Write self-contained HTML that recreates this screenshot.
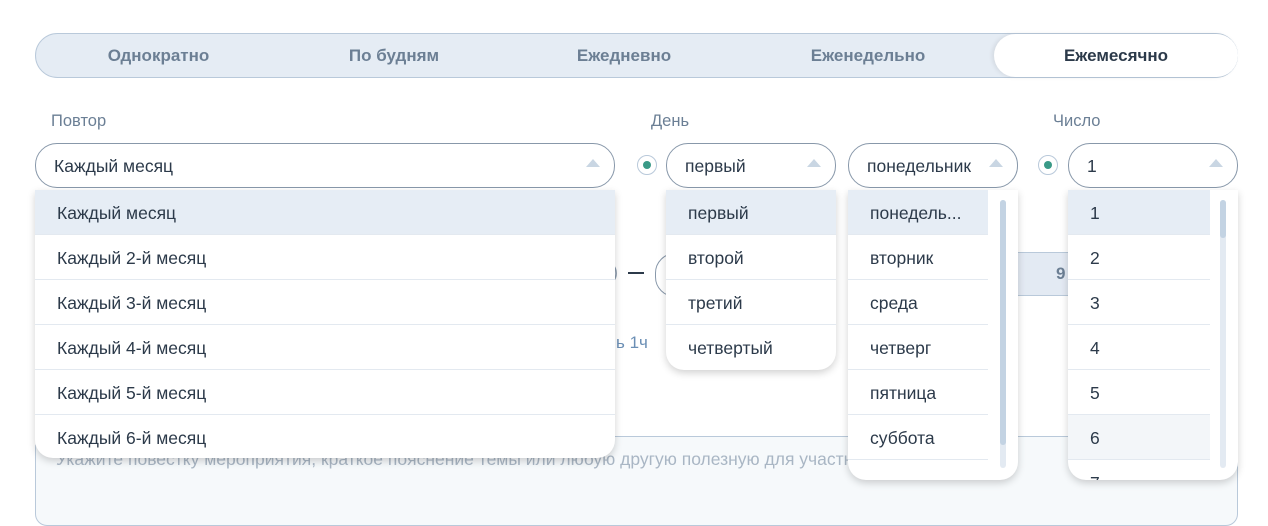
<!DOCTYPE html>
<html><head><meta charset="utf-8"><style>
*{box-sizing:border-box;margin:0;padding:0}
body{width:1268px;height:493px;background:#fff;font-family:"Liberation Sans","Noto Sans CJK SC",sans-serif;position:relative;overflow:hidden;color:#2c3a4a}
.abs{position:absolute}
.tabs{left:35px;top:33px;width:1203px;height:45px;background:#e5ecf4;border:1px solid #b9c9da;border-radius:23px}
.tab{position:absolute;top:0;height:43px;line-height:43px;font-size:17px;font-weight:bold;color:#6c7f94;text-align:center}
.act{left:958px;width:244px;background:#fff;border-radius:22px;color:#2c3a4a;box-shadow:-2px 0 4px rgba(0,0,0,.08)}
.lbl{font-size:16.5px;color:#6b7f95;top:112px}
.sel{top:143px;height:45px;border:1px solid #8898aa;border-radius:22px;background:#fff;font-size:17.5px;line-height:44px;padding-left:18px}
.sel:after{content:"";position:absolute;right:14px;top:15px;border-left:7px solid transparent;border-right:7px solid transparent;border-bottom:8px solid #c9d6e3}
.radio{width:20px;height:20px;border:1px solid #b9c9da;border-radius:50%;top:155px;background:#fff}
.radio:after{content:"";position:absolute;left:5px;top:5px;width:8px;height:8px;border-radius:50%;background:#3a9a87}
.dd{top:190px;background:#fff;border-radius:0 0 18px 18px;box-shadow:0 3px 8px rgba(0,0,0,.18);overflow:hidden}
.row{height:45px;line-height:42px;padding-top:2px;font-size:17.5px;padding-left:22px;border-bottom:1px solid #e3e9f0;color:#2c3a4a;white-space:nowrap}
.hl{background:#e6edf5}
.sb{width:6px;border-radius:3px;background:#e3eaf2}
.th{width:6px;border-radius:3px;background:#c3d3e3}
</style></head><body>
<div class="abs tabs">
<div class="tab" style="left:0;width:245px">Однократно</div>
<div class="tab" style="left:240px;width:236px">По будням</div>
<div class="tab" style="left:470px;width:236px">Ежедневно</div>
<div class="tab" style="left:712px;width:240px">Еженедельно</div>
<div class="tab act">Ежемесячно</div>
</div>
<div class="abs lbl" style="left:51px">Повтор</div>
<div class="abs lbl" style="left:651px">День</div>
<div class="abs lbl" style="left:1053px">Число</div>

<!-- background content -->
<div class="abs" style="left:612px;top:262px;font-size:18px;color:#8898aa">)</div>
<div class="abs" style="left:628px;top:272px;width:16px;height:2px;background:#2c3a4a"></div>
<div class="abs" style="left:655px;top:253px;width:40px;height:44px;border:1px solid #8898aa;border-radius:22px"></div>
<div class="abs" style="left:990px;top:252px;width:90px;height:44px;background:#e3eaf3;border:1px solid #b9c9da"></div>
<div class="abs" style="left:1056px;top:264px;font-size:17px;font-weight:bold;color:#6c7f94">9</div>
<div class="abs" style="left:616px;top:333px;font-size:17px;color:#6b8fb5">ь 1ч</div>
<div class="abs" style="left:35px;top:436px;width:1203px;height:90px;background:#f6f9fb;border:1px solid #b9c9da;border-radius:12px;padding:12px 20px;font-size:17.5px;color:#a9b6c4;white-space:nowrap;overflow:hidden">Укажите повестку мероприятия, краткое пояснение темы или любую другую полезную для участников информацию</div>

<div class="abs sel" style="left:35px;width:580px">Каждый месяц</div>
<div class="abs radio" style="left:637px"></div>
<div class="abs sel" style="left:666px;width:170px">первый</div>
<div class="abs sel" style="left:848px;width:170px">понедельник</div>
<div class="abs radio" style="left:1038px"></div>
<div class="abs sel" style="left:1068px;width:170px">1</div>

<div class="abs dd" style="left:35px;width:580px;height:268px">
<div class="row hl">Каждый месяц</div>
<div class="row">Каждый 2-й месяц</div>
<div class="row">Каждый 3-й месяц</div>
<div class="row">Каждый 4-й месяц</div>
<div class="row">Каждый 5-й месяц</div>
<div class="row" style="border:0">Каждый 6-й месяц</div>
</div>
<div class="abs dd" style="left:666px;width:170px;height:180px">
<div class="row hl">первый</div>
<div class="row">второй</div>
<div class="row">третий</div>
<div class="row" style="border:0">четвертый</div>
</div>
<div class="abs dd" style="left:848px;width:170px;height:290px">
<div style="width:140px">
<div class="row hl">понедель...</div>
<div class="row">вторник</div>
<div class="row">среда</div>
<div class="row">четверг</div>
<div class="row">пятница</div>
<div class="row">суббота</div>
<div class="row"></div>
</div>
<div class="abs sb" style="left:152px;top:10px;height:268px"></div>
<div class="abs th" style="left:152px;top:10px;height:245px"></div>
</div>
<div class="abs dd" style="left:1068px;width:170px;height:290px">
<div style="width:142px">
<div class="row hl">1</div>
<div class="row">2</div>
<div class="row">3</div>
<div class="row">4</div>
<div class="row">5</div>
<div class="row" style="background:#f3f6f9">6</div>
<div class="row">7</div>
</div>
<div class="abs sb" style="left:152px;top:10px;height:268px"></div>
<div class="abs th" style="left:152px;top:10px;height:38px"></div>
</div>
</body></html>
